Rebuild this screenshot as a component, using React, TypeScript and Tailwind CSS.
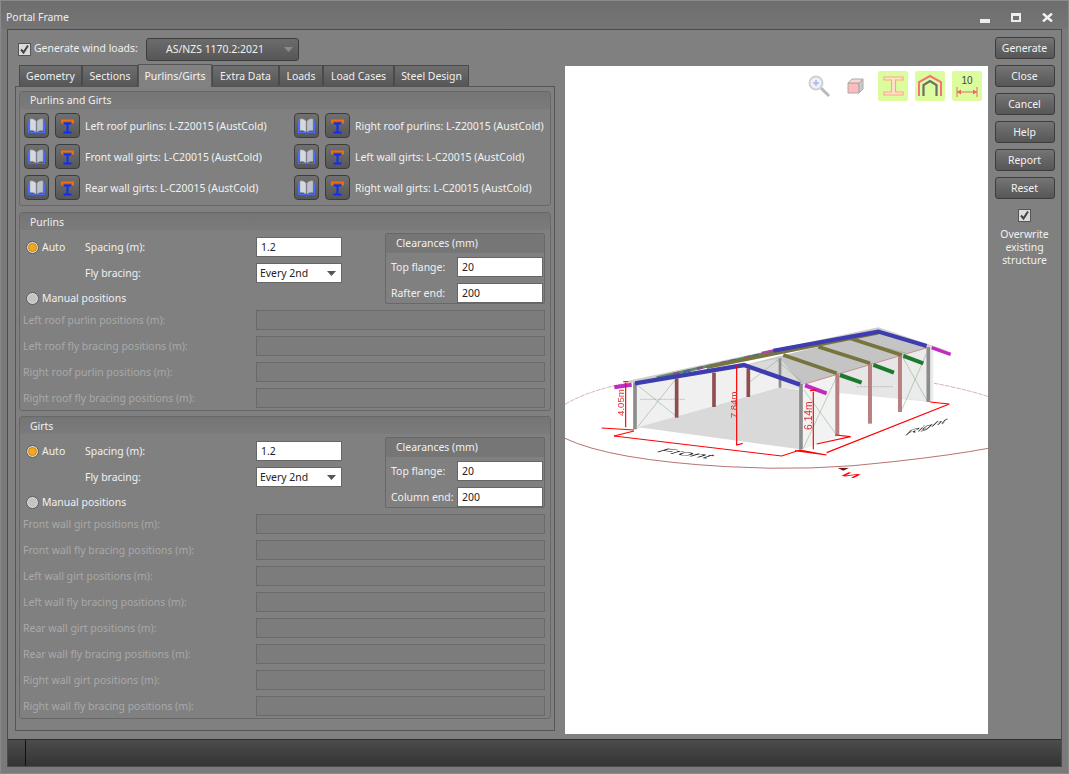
import React from "react";

const Chk = ({ className = "" }: { className?: string }) => (
  <span className={`flex h-[13px] w-[13px] shrink-0 items-center justify-center border border-[#555] bg-[#dcdcdc] ${className}`}>
    <svg width="11" height="11" viewBox="0 0 11 11"><path d="M2 5.5 L4.5 8.5 L9 1.5" fill="none" stroke="#444" strokeWidth="2" /></svg>
  </span>
);

const Radio = ({ on }: { on?: boolean }) => (
  <span className="flex h-[13px] w-[13px] shrink-0 items-center justify-center rounded-full border border-[#5a5a5a] bg-[#d8d8d8]">
    {on ? <span className="h-[9px] w-[9px] rounded-full border border-[#c98a10] bg-[#f5a81c]" /> : <span className="h-[9px] w-[9px] rounded-full bg-[#c4c4c4]" />}
  </span>
);

const Tri = ({ c = "#555" }: { c?: string }) => (
  <svg width="9" height="5" viewBox="0 0 9 5"><path d="M0 0 H9 L4.5 5 Z" fill={c} /></svg>
);

const Book = () => (
  <svg width="23" height="23" viewBox="0 0 23 23">
    <path d="M3.5 7 V18.5 H10.5 M19.5 7 V18.5 H12.5" fill="none" stroke="#4a6cf0" strokeWidth="1.2" />
    <path d="M11 19.5 h1" stroke="#3f5fe6" strokeWidth="2" />
    <path d="M5 5 Q8 4 11 7 V18 Q8 15.5 5 16.5 Z" fill="#d6d9e0" stroke="#9aa0b0" strokeWidth=".6" />
    <path d="M18 5 Q15 4 12 7 V18 Q15 15.5 18 16.5 Z" fill="#bfc3cc" stroke="#9aa0b0" strokeWidth=".6" />
  </svg>
);

const Beam = () => (
  <svg width="23" height="23" viewBox="0 0 23 23">
    <path d="M6 9.5 V6.5 H17 V9.5" fill="none" stroke="#ff6a00" strokeWidth="2" />
    <path d="M8 9.5 H15 M11.5 9.5 V18 M7.5 18.5 H15.5" fill="none" stroke="#0a2cff" strokeWidth="2" />
  </svg>
);

const IconBtn = ({ children }: { children: React.ReactNode }) => (
  <span className="flex h-[25px] w-[25px] shrink-0 items-center justify-center rounded-[4px] border border-[#3c3c3c] bg-gradient-to-b from-[#707070] to-[#565656]">{children}</span>
);

const Btn = ({ label }: { label: string }) => (
  <div className="flex h-[22px] w-[60px] items-center justify-center rounded-[3px] border border-[#3d3d3d] bg-gradient-to-b from-[#757575] to-[#565656] text-[#f2f2f2]">{label}</div>
);

const Group = ({ title, className, top, children }: { title: string; className: string; top: string; children: React.ReactNode }) => (
  <div className={`flex flex-col rounded-[3px] border border-[#686868] ${className}`}>
    <div className={`flex h-[17px] shrink-0 items-center bg-gradient-to-b from-[#757575] to-[#7b7b7b] pl-[10px] text-[#f0f0f0] ${top}`}>{title}</div>
    {children}
  </div>
);

const PickRow = ({ label }: { label: string }) => (
  <div className="flex h-[25px] items-center">
    <IconBtn><Book /></IconBtn>
    <span className="w-[6px]" />
    <IconBtn><Beam /></IconBtn>
    <span className="ml-[5px] whitespace-nowrap pt-[1px] text-[#f2f2f2]">{label}</span>
  </div>
);

const Input = ({ v, w }: { v: string; w: string }) => (
  <div className={`flex h-[20px] items-center border border-[#666] bg-white pl-[4px] text-[#222] ${w}`}>{v}</div>
);

const Clear = ({ second }: { second: string }) => (
  <div className="ml-[43px] flex h-[71px] w-[160px] flex-col rounded-[2px] border border-[#686868]">
    <div className="flex h-[19px] shrink-0 items-center bg-[#767676] pb-[1px] pl-[10px] text-[#f0f0f0]">Clearances (mm)</div>
    <div className="mt-[4px] flex items-center justify-between pl-[5px] pr-[1px] text-[#f0f0f0]"><span>Top flange:</span><Input v="20" w="w-[86px]" /></div>
    <div className="mt-[6px] flex items-center justify-between pl-[5px] pr-[1px] text-[#f0f0f0]"><span>{second}</span><Input v="200" w="w-[86px]" /></div>
  </div>
);

const Spacing = ({ second, rows }: { second: string; rows: string[] }) => (
  <div className="flex flex-col pl-[6px]">
    <div className="mt-[3px] flex">
      <div className="flex w-[316px] flex-col pt-[4px]">
        <div className="flex h-[20px] items-center text-[#f0f0f0]">
          <Radio on /><span className="ml-[3px] w-[43px]">Auto</span><span className="w-[171px]">Spacing (m):</span><Input v="1.2" w="w-[86px]" />
        </div>
        <div className="mt-[6px] flex h-[20px] items-center text-[#f0f0f0]">
          <span className="w-[59px]" /><span className="w-[171px]">Fly bracing:</span>
          <div className="flex h-[20px] w-[86px] items-center justify-between border border-[#666] bg-white pl-[3px] pr-[5px] text-[#222]">Every 2nd<Tri /></div>
        </div>
        <div className="mt-[5px] flex h-[20px] items-center text-[#f0f0f0]"><Radio /><span className="ml-[3px]">Manual positions</span></div>
      </div>
      <Clear second={second} />
    </div>
    <div className="mt-[2px] flex flex-col gap-[6px]">
      {rows.map((r) => (
        <div key={r} className="flex h-[20px] items-center">
          <span className="-ml-[3px] w-[233px] text-[#a9a9a9]">{r}</span>
          <div className="h-[20px] w-[289px] border border-[#6a6a6a] bg-[#7c7c7c]" />
        </div>
      ))}
    </div>
  </div>
);

const Tab = ({ label, w, on }: { label: string; w: string; on?: boolean }) => (
  <div className={on
    ? `relative z-10 -mb-[1px] flex h-[23px] items-center justify-center border border-b-0 border-[#555] bg-[#828282] text-[#f4f4f4] ${w}`
    : `flex h-[21px] items-center justify-center border border-b-0 border-[#4a4a4a] bg-gradient-to-b from-[#6e6e6e] to-[#565656] pt-[1px] text-[#f0f0f0] ${w}`}>{label}</div>
);

const Line = ({ p, c, w, d }: { p: string; c: string; w: number; d?: string }) => (
  <polyline points={p} fill="none" stroke={c} strokeWidth={w} strokeDasharray={d} />
);

const Structure = () => (
  <svg className="absolute inset-0" width="423" height="668" viewBox="0 0 423 668">
    <defs><filter id="b"><feGaussianBlur stdDeviation="0.35" /></filter></defs>
    <g transform="translate(-5 244) scale(.3333)" filter="url(#b)">
      <path d="M15 283 Q130 215 360 200 Q700 160 1000 200 Q1180 225 1285 260" fill="none" stroke="#a66" strokeWidth="1.5" strokeDasharray="14 3" />
      <path d="M15 385 Q150 450 500 470 Q760 485 1000 455 Q1180 435 1285 415" fill="none" stroke="#a55" strokeWidth="2.5" />
      <polygon points="225,218 350,205 350,322 232,358" fill="#efefef" />
      <polygon points="350,205 660,150 660,232 235,352" fill="#f0f0f0" />
      <polygon points="235,352 660,232 720,240 720,418" fill="#d9d9d9" />
      <polygon points="660,145 720,222 1105,112 1105,275 720,238 660,232" fill="#e6e6e6" />
      <polygon points="725,225 835,190 835,378 730,418" fill="#f2f2f2" />
      <polygon points="1020,135 1120,110 1120,275 1020,262" fill="#ebebeb" />
      <polygon points="552,165 955,65 1105,112 725,225" fill="#c4c4c4" />
      <polygon points="552,165 725,225 660,145" fill="#dadada" />
      <g stroke="#7fa67f" strokeWidth="1.5" fill="none">
        <path d="M232 225 L350 320 M345 210 L232 352 M732 240 L830 375 M830 200 L730 415 M1030 145 L1100 270 M1100 130 L1025 300 M570 215 L660 145 M650 150 L725 215 M955 70 L1100 110 M870 85 L1040 130" />
      </g>
      <path d="M240 268 H375 M890 230 H1000" stroke="#999" strokeWidth="1.5" strokeDasharray="8 2" />
      <polygon points="190,215 955,52 1172,125 1105,108 955,65 225,218" fill="#cfcfcf" />
      <Line p="290,203 660,120" c="#5c8a6c" w={8} />
      <Line p="340,192 660,120" c="#8a4f7a" w={8} d="18 55" />
      <Line p="370,186 660,120" c="#4d6c80" w={8} d="22 48" />
      <Line p="605,128 662,116" c="#b03fb0" w={6} />
      <Line p="350,205 350,323" c="#8f4e4e" w={11} />
      <Line p="462,188 462,291" c="#8f4e4e" w={11} />
      <Line p="565,175 565,261" c="#8f4e4e" w={11} />
      <Line p="660,145 660,233" c="#8b8b8b" w={8} />
      <Line p="832,190 832,376" c="#b88080" w={12} />
      <Line p="930,160 930,341" c="#b88080" w={12} />
      <Line p="1020,135 1020,306" c="#b88080" w={12} />
      <Line p="225,218 225,358" c="#8c8c8c" w={11} />
      <Line p="723,222 723,418" c="#8c8c8c" w={11} />
      <Line p="1105,110 1105,276" c="#8c8c8c" w={11} />
      <Line p="735,222 1105,112" c="#c49090" w={3} />
      <Line p="440,172 955,68" c="#77743e" w={11} />
      <Line p="670,135 830,190" c="#77743e" w={11} />
      <Line p="775,110 930,160" c="#77743e" w={11} />
      <Line p="870,85 1025,135" c="#77743e" w={11} />
      <Line p="840,195 905,218" c="#1f7a2f" w={12} />
      <Line p="940,165 1002,188" c="#1f7a2f" w={12} />
      <Line p="1030,138 1090,160" c="#1f7a2f" w={12} />
      <Line p="640,122 955,65 1100,108" c="#3d3db0" w={12} />
      <Line p="225,220 552,165 720,224" c="#3d3db0" w={13} />
      <Line p="163,232 215,224" c="#c22cc2" w={12} />
      <Line p="735,226 800,250" c="#c22cc2" w={12} />
      <Line p="1115,113 1172,133" c="#c22cc2" w={10} />
      <g stroke="#f00" fill="none" strokeWidth="3.5">
        <polyline points="162,378 222,363" />
        <polyline points="162,378 665,438 720,420 800,435 705,422" />
        <polyline points="125,354 222,360" />
        <polyline points="800,428 1168,282 1110,276" />
        <polyline points="770,402 872,380 825,375" />
        <polyline points="197,218 197,352" />
        <polyline points="530,165 530,405 548,400" />
        <polyline points="760,245 760,418" />
        <polyline points="190,215 205,215" />
        <polyline points="750,242 770,240" />
      </g>
      <text transform="translate(192 318) rotate(-90)" fontSize="29" fill="#d33" fontFamily="Liberation Sans">4.05m</text>
      <text transform="translate(532 325) rotate(-90)" fontSize="29" fill="#d33" fontFamily="Liberation Sans">7.84m</text>
      <text transform="translate(757 360) rotate(-90)" fontSize="31" fill="#d33" fontFamily="Liberation Sans">6.14m</text>
      <text transform="matrix(1.5 .2 -1.1 .35 285 425)" fontSize="44" fill="#222" fontFamily="Liberation Sans">Front</text>
      <text transform="matrix(1.3 -.42 -.6 .6 1032 378)" fontSize="40" fill="#222" fontFamily="Liberation Sans">Right</text>
      <text transform="matrix(-1.4 -.25 -.7 .35 885 505)" fontSize="44" fill="#f00" fontWeight="bold" fontFamily="Liberation Sans">N</text>
      <polygon points="832,473 868,473 850,482" fill="#6b1c1c" />
    </g>
  </svg>
);

const GreenBtn = ({ children }: { children: React.ReactNode }) => (
  <div className="flex h-[30px] w-[30px] items-center justify-center rounded-[2px] bg-[#dcfd9d]">{children}</div>
);

export default function App() {
  const tabs: [string, string, boolean?][] = [
    ["Geometry", "w-[63px]"], ["Sections", "w-[56px]"], ["Purlins/Girts", "w-[74px]", true], ["Extra Data", "w-[67px]"],
    ["Loads", "w-[44px]"], ["Load Cases", "w-[71px]"], ["Steel Design", "w-[75px]"],
  ];
  return (
    <div className="flex h-[774px] w-[1069px] flex-col overflow-hidden border border-[#8a8a8a] bg-[#7a7a7a] font-['Noto_Sans',sans-serif] text-[10.45px] leading-none">
      <div className="flex h-[28px] shrink-0 items-center justify-between bg-gradient-to-b from-[#6e6e6e] to-[#757575] pl-[5px] pr-[15px] pt-[5px] text-[#ededed]">
        <span>Portal Frame</span>
        <div className="flex items-center gap-[21px]">
          <span className="mt-[7px] h-[4px] w-[10px] bg-[#ececec]" />
          <span className="h-[9px] w-[10px] border-2 border-t-[3px] border-[#ececec]" />
          <svg width="11" height="9" viewBox="0 0 11 9"><path d="M1 .5 L10 8.5 M10 .5 L1 8.5" stroke="#f2f2f2" strokeWidth="2.4" /></svg>
        </div>
      </div>
      <div className="mx-[6px] flex h-[738px] shrink-0 flex-col border border-[#4c4c4c] bg-[#808080]">
        <div className="flex flex-1">
          <div className="flex w-[557px] shrink-0 flex-col pl-[7px]">
            <div className="flex h-[34px] shrink-0 items-end pb-[3px] pl-[3px]">
              <div className="flex h-[24px] items-center text-[#f0f0f0]">
                <Chk /><span className="ml-[3px] w-[112px] pb-[1px]">Generate wind loads:</span>
                <div className="flex h-[23px] w-[153px] items-center justify-between rounded-[3px] border border-[#3d3d3d] bg-gradient-to-b from-[#6c6c6c] to-[#565656] pl-[19px] pr-[5px] text-[#f0f0f0]">
                  <span>AS/NZS 1170.2:2021</span><Tri c="#8a8a8a" />
                </div>
              </div>
            </div>
            <div className="flex h-[22px] shrink-0 items-end pl-[4px]">
              {tabs.map(([l, w, on]) => <Tab key={l} label={l} w={w} on={on} />)}
            </div>
            <div className="flex h-[645px] w-[540px] flex-col border border-[#555] px-[3px] pt-[4px]">
              <Group title="Purlins and Girts" top="pb-[1px]" className="h-[115px]">
                <div className="grid grid-cols-[270px_1fr] gap-y-[6px] pl-[4px] pt-[4px]">
                  <PickRow label="Left roof purlins: L-Z20015 (AustCold)" />
                  <PickRow label="Right roof purlins: L-Z20015 (AustCold)" />
                  <PickRow label="Front wall girts: L-C20015 (AustCold)" />
                  <PickRow label="Left wall girts: L-C20015 (AustCold)" />
                  <PickRow label="Rear wall girts: L-C20015 (AustCold)" />
                  <PickRow label="Right wall girts: L-C20015 (AustCold)" />
                </div>
              </Group>
              <Group title="Purlins" top="pt-[1px]" className="mt-[6px] h-[199px]">
                <Spacing second="Rafter end:" rows={["Left roof purlin positions (m):", "Left roof fly bracing positions (m):", "Right roof purlin positions (m):", "Right roof fly bracing positions (m):"]} />
              </Group>
              <Group title="Girts" top="pt-[1px]" className="mt-[5px] h-[303px]">
                <Spacing second="Column end:" rows={["Front wall girt positions (m):", "Front wall fly bracing positions (m):", "Left wall girt positions (m):", "Left wall fly bracing positions (m):", "Rear wall girt positions (m):", "Rear wall fly bracing positions (m):", "Right wall girt positions (m):", "Right wall fly bracing positions (m):"]} />
              </Group>
            </div>
          </div>
          <div className="mt-[36px] h-[668px] w-[423px] shrink-0 bg-white">
            <div className="relative h-full w-full">
              <Structure />
              <div className="relative flex items-center justify-end gap-[7px] pr-[6px] pt-[5px]">
                <svg className="mr-[8px]" width="24" height="24" viewBox="0 0 24 24">
                  <path d="M14 14 L22 22" stroke="#b9b9b9" strokeWidth="3" />
                  <circle cx="9" cy="9" r="6.5" fill="#eef0fa" stroke="#d0d0d0" strokeWidth="2" />
                  <path d="M6 9 H12 M9 6 V12" stroke="#a9b8ea" strokeWidth="1.6" />
                </svg>
                <svg className="mr-[5px]" width="20" height="18" viewBox="0 0 20 18">
                  <path d="M2 6 H13 V16 H2 Z" fill="#ffbcbc" stroke="#a8a8a8" />
                  <path d="M2 6 L6 2 H17 L13 6 Z" fill="#ffd6d6" stroke="#a8a8a8" />
                  <path d="M13 6 L17 2 V12 L13 16 Z" fill="#c9c9c9" stroke="#a8a8a8" />
                </svg>
                <GreenBtn>
                  <svg width="22" height="22" viewBox="0 0 22 22"><path d="M2 2 H21 V5 H13.5 V17 H21 V20 H2 V17 H9.5 V5 H2 Z" fill="#ffe3d0" stroke="#ffa87f" strokeWidth="1.2" /></svg>
                </GreenBtn>
                <GreenBtn>
                  <svg width="26" height="24" viewBox="0 0 26 24">
                    <path d="M2 22 V8 L13 2 L24 8 V22" fill="none" stroke="#f87373" strokeWidth="2" />
                    <path d="M6.5 22 V11 L13 7 L19.5 11 V22" fill="none" stroke="#6c6c6c" strokeWidth="2.2" />
                  </svg>
                </GreenBtn>
                <GreenBtn>
                  <svg width="24" height="24" viewBox="0 0 24 24">
                    <path d="M2 13 V23 M22 13 V23 M2 18 H22" stroke="#f26464" strokeWidth="1" fill="none" />
                    <path d="M2 18 L6 15.5 V20.5 Z M22 18 L18 15.5 V20.5 Z" fill="#f26464" />
                    <text x="12" y="10" textAnchor="middle" fontSize="10" fill="#444" fontFamily="Liberation Sans">10</text>
                  </svg>
                </GreenBtn>
              </div>
            </div>
          </div>
          <div className="flex w-[74px] flex-col items-center gap-[6px] pt-[7px] text-[#f0f0f0]">
            {["Generate", "Close", "Cancel", "Help", "Report", "Reset"].map((b) => <Btn key={b} label={b} />)}
            <Chk className="mt-[4px]" />
            <div className="w-[60px] text-center leading-[13px]">Overwrite existing structure</div>
          </div>
        </div>
        <div className="flex h-[27px] shrink-0 items-stretch border-t border-[#2d2d2d] bg-gradient-to-b from-[#4c4c4c] to-[#343434] pl-[17px]">
          <span className="w-[1px] bg-[#111]" />
        </div>
      </div>
    </div>
  );
}
